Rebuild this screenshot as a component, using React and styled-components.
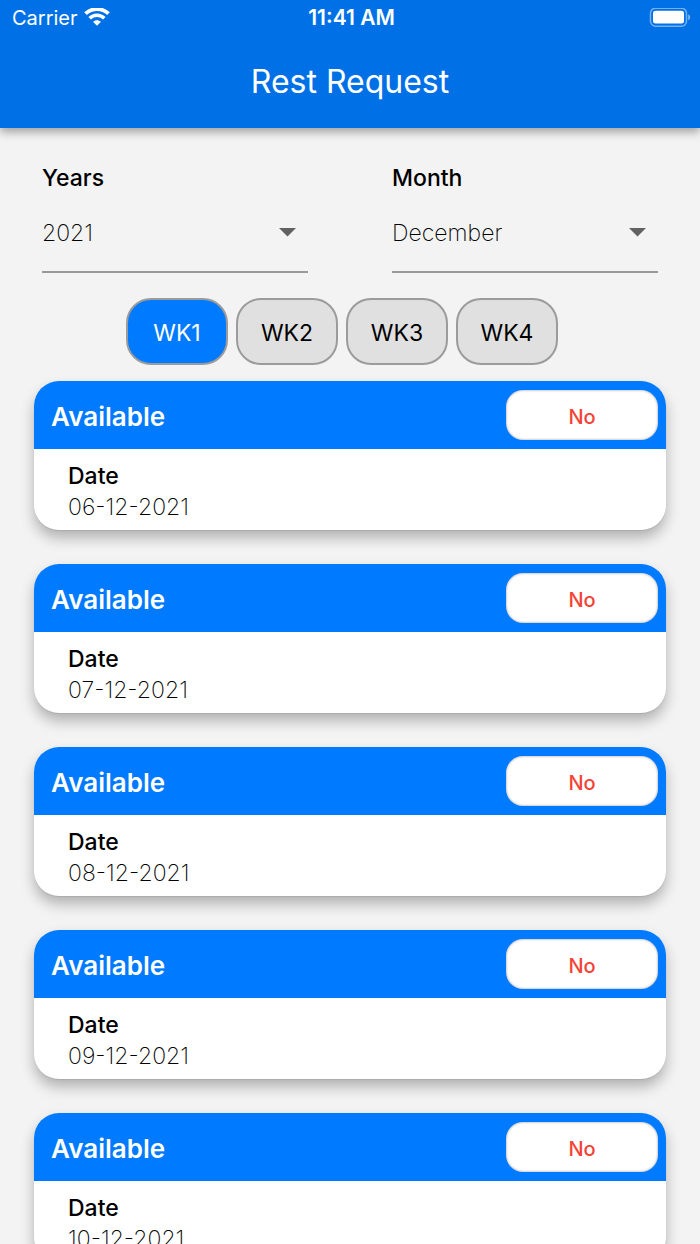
import React, { useState } from "react";
import styled, { createGlobalStyle } from "styled-components";

const GlobalStyle = createGlobalStyle`
  *, *::before, *::after { box-sizing: border-box; }
  body {
    margin: 0;
    background: #f3f3f3;
    color: #000;
    font-family: Inter, "Liberation Sans", sans-serif;
  }
`;

const Screen = styled.div`
  display: flex;
  flex-direction: column;
  height: 100vh;
  overflow: hidden;
`;

const Header = styled.header`
  position: relative;
  z-index: 1;
  flex: none;
  padding-bottom: 22px;
  background: #0070e6;
  color: #fff;
  box-shadow: 0 4px 9px rgba(0, 0, 0, 0.35);
`;

const StatusBar = styled.div`
  display: grid;
  grid-template-columns: 1fr auto 1fr;
  align-items: center;
  height: 36px;
  padding: 0 9px 0 12px;
  font-size: 20px;
  line-height: 24px;
`;

const Carrier = styled.div`
  display: flex;
  align-items: center;
  gap: 6px;
`;

const Clock = styled.time`
  font-size: 21px;
  font-weight: 600;
`;

const Battery = styled.svg`
  justify-self: end;
`;

const Title = styled.h1`
  margin: 0;
  padding-top: 22px;
  font-size: 32px;
  font-weight: 400;
  line-height: 48px;
  text-align: center;
`;

const Content = styled.main`
  flex: 1;
  min-height: 0;
  overflow-y: auto;
  scrollbar-width: none;
`;

const Filters = styled.div`
  display: grid;
  grid-template-columns: 1fr 1fr;
  padding-top: 36px;
`;

const Field = styled.div`
  padding: 0 42px;
`;

const Label = styled.label`
  display: block;
  font-size: 23px;
  font-weight: 500;
  line-height: 28px;
`;

const SelectBox = styled.div`
  display: flex;
  align-items: center;
  height: 81px;
  padding-top: 2px;
  border-bottom: 2px solid #999;
`;

const Select = styled.select`
  flex: 1;
  min-width: 0;
  height: 72px;
  margin-right: -30px;
  padding: 0 30px 0 0;
  border: 0;
  background: transparent;
  color: #000;
  font-family: inherit;
  font-size: 23px;
  font-weight: 200;
  appearance: none;
`;

const Caret = styled.svg`
  flex: none;
  margin-right: 12px;
  pointer-events: none;
`;

const Weeks = styled.div`
  display: flex;
  justify-content: center;
  gap: 8px;
  padding: 25px 16px 16px 0;
`;

const WeekButton = styled.button`
  width: 102px;
  height: 67px;
  padding: 2px 0 0;
  border: 2px solid #9b9b9b;
  border-radius: 25px;
  background: ${(p) => (p.$active ? "#007aff" : "#e0e0e0")};
  color: ${(p) => (p.$active ? "#fff" : "#000")};
  font-family: inherit;
  font-size: 23px;
`;

const Days = styled.ul`
  display: flex;
  flex-direction: column;
  gap: 34px;
  margin: 0;
  padding: 0 34px 34px;
  list-style: none;
`;

const DayCard = styled.li`
  height: 149px;
  border-radius: 25px;
  background: #fff;
  box-shadow: 0 8px 14px rgba(0, 0, 0, 0.27), 0 1px 1px rgba(0, 0, 0, 0.08);
`;

const DayHeader = styled.div`
  display: flex;
  align-items: center;
  justify-content: space-between;
  height: 68px;
  padding: 0 8px 0 17px;
  border-radius: 25px 25px 0 0;
  background: #007aff;
  color: #fff;
`;

const DayTitle = styled.h2`
  margin: 0;
  padding-top: 3px;
  font-size: 26px;
  font-weight: 600;
  line-height: 32px;
`;

const AnswerButton = styled.button`
  width: 152px;
  height: 50px;
  padding: 3px 0 0;
  border: 0;
  border-radius: 17px;
  background: #fff;
  color: #f44336;
  font-family: inherit;
  font-size: 20px;
  font-weight: 500;
  box-shadow: inset 0 0 2px 1px rgba(0, 0, 0, 0.2);
`;

const DayBody = styled.dl`
  margin: 0;
  padding: 12px 34px 0;
  line-height: 31px;
`;

const DayLabel = styled.dt`
  font-size: 23px;
  font-weight: 500;
`;

const DayDate = styled.dd`
  margin: 0;
  font-size: 23px;
  font-weight: 200;
`;

const weeks = ["WK1", "WK2", "WK3", "WK4"];
const dates = ["06-12-2021", "07-12-2021", "08-12-2021", "09-12-2021", "10-12-2021"];

function WifiIcon() {
  return (
    <svg width="26" height="20" viewBox="0 0 26 20" fill="none" stroke="#fff" aria-hidden="true">
      <path d="M1.5 5.7C8 -.5 18 -.5 24.5 5.7" strokeWidth="3.8" />
      <path d="M5.7 10.2C9.8 6.2 16.2 6.2 20.3 10.2" strokeWidth="3.6" />
      <path d="M9 13.7C11.4 11.6 14.6 11.6 17 13.7L13 17.7Z" fill="#fff" stroke="none" />
    </svg>
  );
}

function Dropdown({ id, label, options }) {
  return (
    <Field>
      <Label htmlFor={id}>{label}</Label>
      <SelectBox>
        <Select id={id}>
          {options.map((o) => (
            <option key={o}>{o}</option>
          ))}
        </Select>
        <Caret width="17" height="9" viewBox="0 0 17 9" aria-hidden="true">
          <path d="M0 0H17L8.5 8.5Z" fill="#616161" />
        </Caret>
      </SelectBox>
    </Field>
  );
}

export default function App() {
  const [week, setWeek] = useState("WK1");
  return (
    <Screen>
      <GlobalStyle />
      <Header>
        <StatusBar>
          <Carrier>
            Carrier
            <WifiIcon />
          </Carrier>
          <Clock>11:41 AM</Clock>
          <Battery width="42" height="20" viewBox="0 0 42 20" aria-hidden="true">
            <rect x="1.5" y=".2" width="36" height="18" rx="5" fill="none" stroke="#fff" strokeOpacity=".45" strokeWidth="1.5" />
            <rect x="4" y="2.8" width="31" height="12.8" rx="2.5" fill="#fff" />
            <path d="M39.2 6.2C41.8 7.2 41.8 11.2 39.2 12.2Z" fill="#fff" fillOpacity=".5" />
          </Battery>
        </StatusBar>
        <Title>Rest Request</Title>
      </Header>
      <Content>
        <Filters>
          <Dropdown id="year" label="Years" options={["2021"]} />
          <Dropdown id="month" label="Month" options={["December"]} />
        </Filters>
        <Weeks>
          {weeks.map((w) => (
            <WeekButton key={w} type="button" $active={w === week} aria-pressed={w === week} onClick={() => setWeek(w)}>
              {w}
            </WeekButton>
          ))}
        </Weeks>
        <Days>
          {dates.map((d) => (
            <DayCard key={d}>
              <DayHeader>
                <DayTitle>Available</DayTitle>
                <AnswerButton type="button">No</AnswerButton>
              </DayHeader>
              <DayBody>
                <DayLabel>Date</DayLabel>
                <DayDate>{d}</DayDate>
              </DayBody>
            </DayCard>
          ))}
        </Days>
      </Content>
    </Screen>
  );
}
